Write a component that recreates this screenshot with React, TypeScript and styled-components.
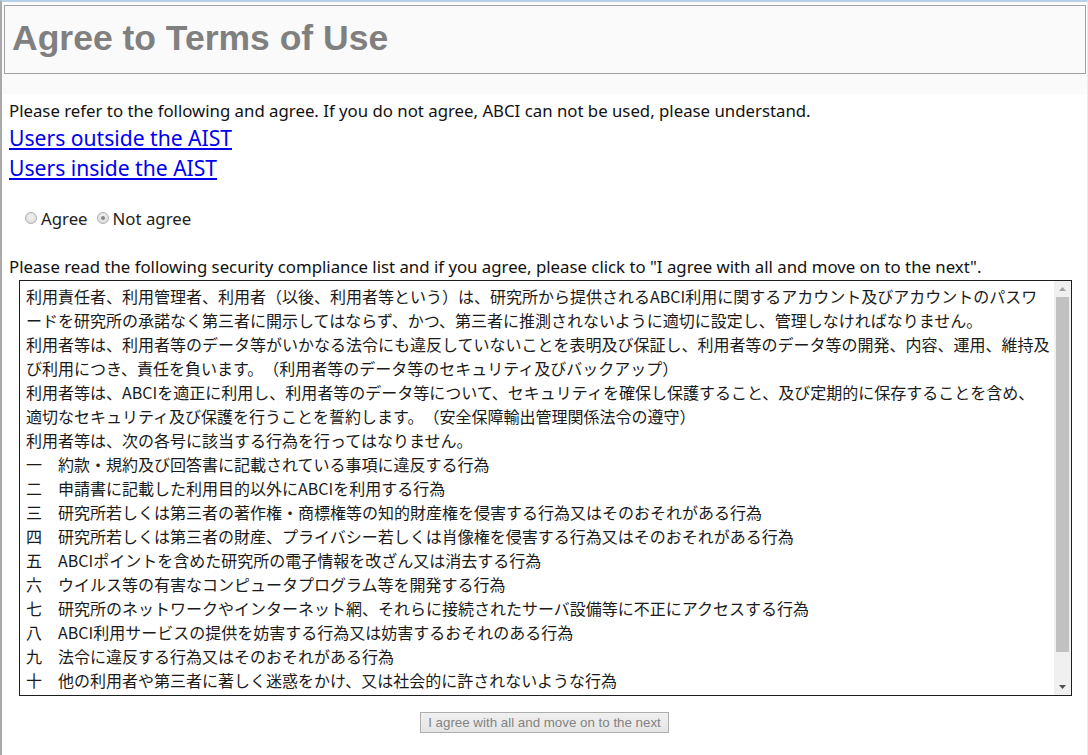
import React from "react";
import styled, { createGlobalStyle } from "styled-components";

const GlobalStyle = createGlobalStyle`
  html, body {
    margin: 0;
    padding: 0;
    background: #ffffff;
  }
  body {
    font-family: "Noto Sans", "Noto Sans CJK JP", sans-serif;
    color: #111111;
  }
`;

const Page = styled.div`
  box-sizing: border-box;
  min-height: 755px;
  border-top: 2px solid #b7d0e8;
  border-left: 2px solid #a9a9a9;
  border-right: 1px solid #ececec;
`;

const HeaderBand = styled.header`
  background: #fafafa;
  padding: 3px 1px 20px 2px;
`;

const TitleBox = styled.div`
  border: 1px solid #a2a2a2;
  padding: 13px 7px 15px;
`;

const Title = styled.h1`
  margin: 0;
  font-family: "Liberation Sans", Arial, sans-serif;
  font-weight: 700;
  font-size: 35.5px;
  line-height: 39px;
  color: #808080;
`;

const Content = styled.main`
  padding: 5px 7px 0;
`;

const Paragraph = styled.p<{ $gap?: number }>`
  margin: ${(p) => p.$gap ?? 0}px 0 0;
  font-size: 16.8px;
  line-height: 24px;
  white-space: nowrap;
`;

const LinkList = styled.div`
  display: flex;
  flex-direction: column;
  align-items: flex-start;
`;

const BigLink = styled.a`
  font-size: 21.1px;
  line-height: 30px;
  color: #0000ee;
  text-decoration: underline;
`;

const RadioRow = styled.div`
  display: flex;
  align-items: center;
  margin-top: 23px;
  padding-left: 16px;
  height: 24px;
  font-size: 16.8px;
`;

const RadioLabel = styled.label`
  display: flex;
  align-items: center;
  gap: 4px;
  margin-right: 9px;
  color: #222222;
`;

const Radio = styled.input.attrs({ type: "radio" })`
  appearance: none;
  margin: 0;
  width: 12px;
  height: 12px;
  border-radius: 50%;
  border: 1px solid #b0b0b0;
  background: radial-gradient(circle at 50% 40%, #f2f2f2, #d8d8d8);
  box-sizing: border-box;
  display: grid;
  place-items: center;
  &:checked::after {
    content: "";
    width: 4px;
    height: 4px;
    border-radius: 50%;
    background: #858585;
  }
`;

const TermsBox = styled.div`
  box-sizing: border-box;
  display: flex;
  margin: 1px 0 0 10px;
  width: 1053px;
  height: 416px;
  border: 1px solid #1e1e1e;
  background: #ffffff;
`;

const TermsText = styled.div`
  flex: 1;
  overflow: hidden;
  padding: 3px 0 0 6px;
  font-family: "Noto Sans CJK JP", "Noto Sans", sans-serif;
  font-size: 16px;
  line-height: 24px;
  color: #1a1a1a;
  text-spacing-trim: space-all;
`;

const TermsLine = styled.div`
  white-space: pre;
`;

const Scrollbar = styled.div`
  width: 17px;
  display: flex;
  flex-direction: column;
  background: #f0f0f0;
`;

const ScrollButton = styled.div`
  height: 16px;
  display: flex;
  align-items: center;
  justify-content: center;
`;

const ScrollTrack = styled.div`
  flex: 1;
  padding: 0 2px 0 2px;
`;

const ScrollThumb = styled.div<{ $height: number }>`
  height: ${(p) => p.$height}px;
  background: #c1c1c1;
`;

const ButtonRow = styled.div`
  display: flex;
  justify-content: center;
  margin-top: 16px;
`;

const NextButton = styled.button`
  box-sizing: border-box;
  height: 21px;
  padding: 0 7px;
  border: 1px solid #adadad;
  background: linear-gradient(#f0f0f0, #e5e5e5);
  color: #838383;
  font-family: "Liberation Sans", Arial, sans-serif;
  font-size: 13.333px;
  line-height: 19px;
`;

const termsLines = [
  "利用責任者、利用管理者、利用者（以後、利用者等という）は、研究所から提供されるABCI利用に関するアカウント及びアカウントのパスワ",
  "ードを研究所の承諾なく第三者に開示してはならず、かつ、第三者に推測されないように適切に設定し、管理しなければなりません。",
  "利用者等は、利用者等のデータ等がいかなる法令にも違反していないことを表明及び保証し、利用者等のデータ等の開発、内容、運用、維持及",
  "び利用につき、責任を負います。（利用者等のデータ等のセキュリティ及びバックアップ）",
  "利用者等は、ABCIを適正に利用し、利用者等のデータ等について、セキュリティを確保し保護すること、及び定期的に保存することを含め、",
  "適切なセキュリティ及び保護を行うことを誓約します。（安全保障輸出管理関係法令の遵守）",
  "利用者等は、次の各号に該当する行為を行ってはなりません。",
  "一　約款・規約及び回答書に記載されている事項に違反する行為",
  "二　申請書に記載した利用目的以外にABCIを利用する行為",
  "三　研究所若しくは第三者の著作権・商標権等の知的財産権を侵害する行為又はそのおそれがある行為",
  "四　研究所若しくは第三者の財産、プライバシー若しくは肖像権を侵害する行為又はそのおそれがある行為",
  "五　ABCIポイントを含めた研究所の電子情報を改ざん又は消去する行為",
  "六　ウイルス等の有害なコンピュータプログラム等を開発する行為",
  "七　研究所のネットワークやインターネット網、それらに接続されたサーバ設備等に不正にアクセスする行為",
  "八　ABCI利用サービスの提供を妨害する行為又は妨害するおそれのある行為",
  "九　法令に違反する行為又はそのおそれがある行為",
  "十　他の利用者や第三者に著しく迷惑をかけ、又は社会的に許されないような行為",
  " ",
];

const Arrow = ({ up, color }: { up?: boolean; color: string }) => (
  <svg width="7" height="4" viewBox="0 0 7 4">
    {up ? (
      <polygon points="0,4 7,4 3.5,0" fill={color} />
    ) : (
      <polygon points="0,0 7,0 3.5,4" fill={color} />
    )}
  </svg>
);

export default function App() {
  return (
    <>
      <GlobalStyle />
      <Page>
        <HeaderBand>
          <TitleBox>
            <Title>Agree to Terms of Use</Title>
          </TitleBox>
        </HeaderBand>
        <Content>
          <Paragraph>
            Please refer to the following and agree. If you do not agree, ABCI can not be used,
            please understand.
          </Paragraph>
          <LinkList>
            <BigLink href="#outside">Users outside the AIST</BigLink>
            <BigLink href="#inside">Users inside the AIST</BigLink>
          </LinkList>
          <RadioRow>
            <RadioLabel>
              <Radio name="agree" value="agree" />
              Agree
            </RadioLabel>
            <RadioLabel>
              <Radio name="agree" value="notagree" defaultChecked />
              Not agree
            </RadioLabel>
          </RadioRow>
          <Paragraph $gap={25}>
            Please read the following security compliance list and if you agree, please click to "I
            agree with all and move on to the next".
          </Paragraph>
          <TermsBox>
            <TermsText>
              {termsLines.map((line, i) => (
                <TermsLine key={i}>{line}</TermsLine>
              ))}
            </TermsText>
            <Scrollbar>
              <ScrollButton>
                <Arrow up color="#a3a3a3" />
              </ScrollButton>
              <ScrollTrack>
                <ScrollThumb $height={355} />
              </ScrollTrack>
              <ScrollButton>
                <Arrow color="#505050" />
              </ScrollButton>
            </Scrollbar>
          </TermsBox>
          <ButtonRow>
            <NextButton disabled>I agree with all and move on to the next</NextButton>
          </ButtonRow>
        </Content>
      </Page>
    </>
  );
}
